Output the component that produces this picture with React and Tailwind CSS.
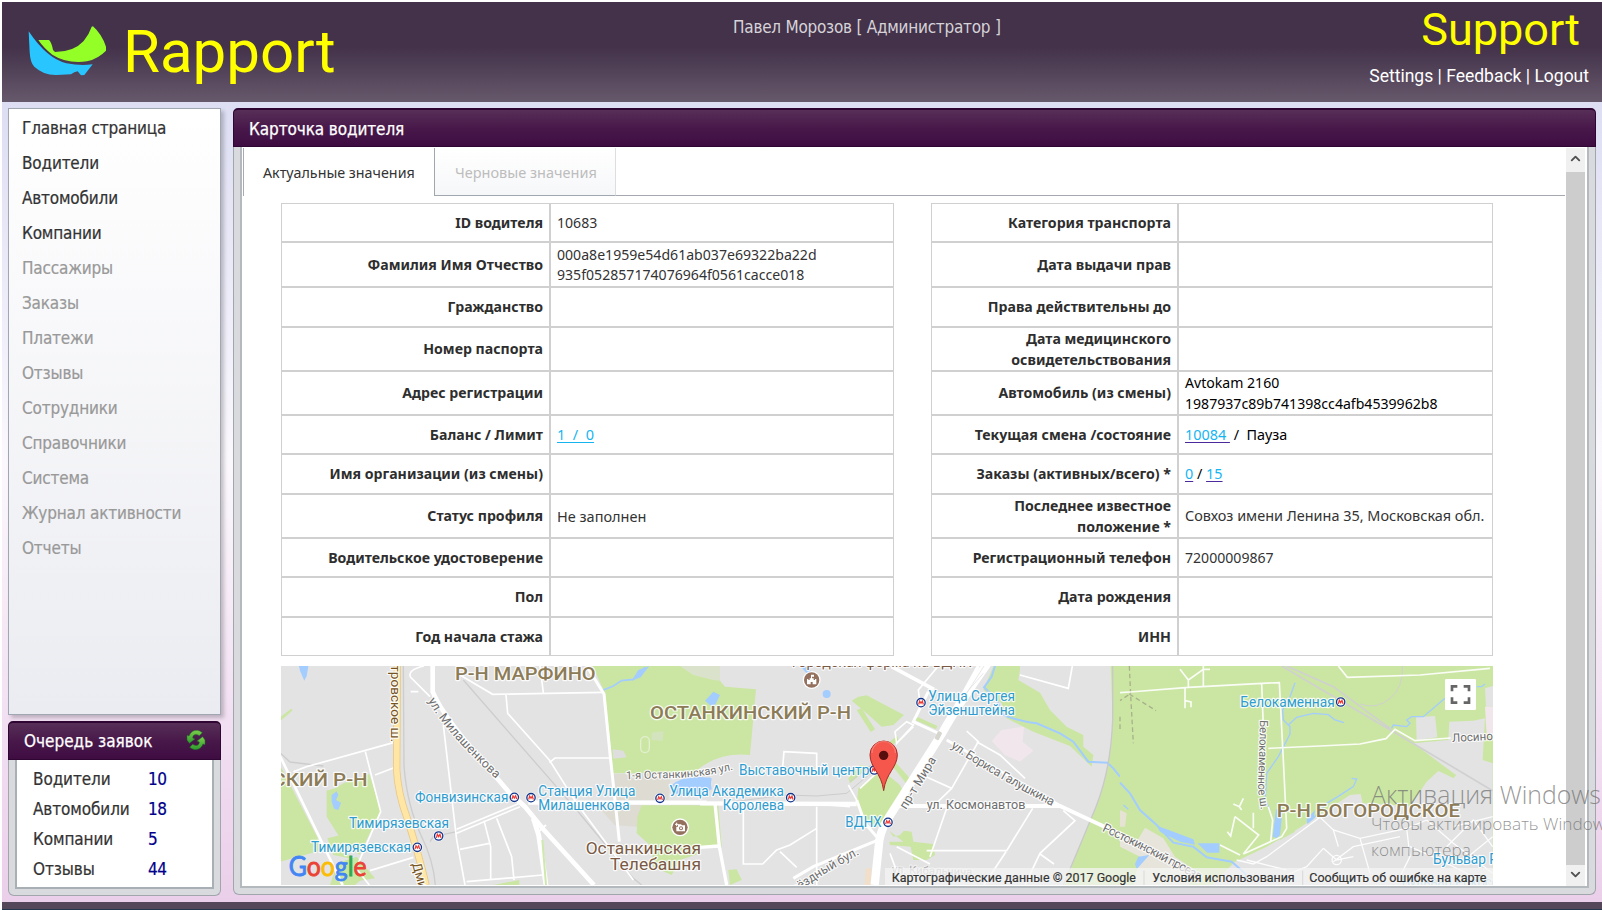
import React from "react";
import { ChevronUp, ChevronDown } from "lucide-react";

const menu = [
  "Главная страница", "Водители", "Автомобили", "Компании", "Пассажиры", "Заказы", "Платежи",
  "Отзывы", "Сотрудники", "Справочники", "Система", "Журнал активности", "Отчеты",
];

const queue = [["Водители", 10], ["Автомобили", 18], ["Компании", 5], ["Отзывы", 44]];

const rowHeights = [39, 45, 40, 44, 44, 39, 40, 44, 39, 40, 39];

function Link({ children }) {
  return <span className="text-[#17b4f2] underline decoration-[#4b2a9b] decoration-1 underline-offset-2">{children}</span>;
}

const leftRows = [
  ["ID водителя", "10683"],
  ["Фамилия Имя Отчество", <>000a8e1959e54d61ab037e69322ba22d<br />935f052857174076964f0561cacce018</>],
  ["Гражданство", ""],
  ["Номер паспорта", ""],
  ["Адрес регистрации", ""],
  ["Баланс / Лимит", <span className="whitespace-pre text-[14.5px] underline decoration-[#17b4f2] decoration-1 text-[#17b4f2] underline-offset-2">{"1  /  0"}</span>],
  ["Имя организации (из смены)", ""],
  ["Статус профиля", <span className="text-[14.5px]">Не заполнен</span>],
  ["Водительское удостоверение", ""],
  ["Пол", ""],
  ["Год начала стажа", ""],
];

const rightRows = [
  ["Категория транспорта", ""],
  ["Дата выдачи прав", ""],
  ["Права действительны до", ""],
  [<>Дата медицинского<br />освидетельствования</>, ""],
  ["Автомобиль (из смены)", <span className="text-black">Avtokam 2160<br />1987937c89b741398cc4afb4539962b8</span>],
  ["Текущая смена /состояние", <span className="whitespace-pre text-[14.4px] text-black"><Link>{"10084 "}</Link>{" /  Пауза"}</span>],
  ["Заказы (активных/всего) *", <span className="text-[14.4px] text-black"><Link>0</Link> / <Link>15</Link></span>],
  [<>Последнее известное<br />положение *</>, <span className="text-[14.45px]">Совхоз имени Ленина 35, Московская обл.</span>],
  ["Регистрационный телефон", "72000009867"],
  ["Дата рождения", ""],
  ["ИНН", ""],
];

function InfoTable({ rows, width, labelWidth }) {
  return (
    <table className="table-fixed border-separate border-spacing-0 text-[14.1px] leading-[20.5px] text-[#333]" style={{ width }}>
      <colgroup>
        <col style={{ width: labelWidth }} />
        <col />
      </colgroup>
      <tbody>
        {rows.map(([label, value], i) => (
          <tr key={i} style={{ height: rowHeights[i] }}>
            <th className="border border-[#d0d0d0] pt-px pr-[6px] pb-0 pl-0 text-right align-middle text-[14.15px] leading-[20.5px] font-bold text-[#2e2e2e] whitespace-nowrap">{label}</th>
            <td className="border border-[#d0d0d0] pt-px pr-0 pb-0 pl-[6px] align-middle whitespace-nowrap">{value}</td>
          </tr>
        ))}
      </tbody>
    </table>
  );
}

function Logo() {
  return (
    <svg viewBox="0 0 240 150" className="h-[50px] w-[80px]">
      <path d="M5 16 L8 78 Q10 112 22 122 Q50 148 88 147 L132 145 Q142 138 152 136 L162 148 L172 147 L197 115 Q160 120 118 112 Q60 98 5 16Z" fill="#29c5ff" />
      <path d="M34 42 L66 42 Q74 50 78 72 L84 78 Q140 78 170 45 Q186 26 194 2 L198 1 Q224 24 237 62 L237 74 Q214 98 180 106 Q120 114 76 86 Q50 66 34 42Z" fill="#94ff26" />
    </svg>
  );
}

function Refresh() {
  return (
    <svg viewBox="0 0 60 60" className="mb-[2px] h-[20px] w-[20px]">
      <defs>
        <linearGradient id="arrowGreen" x1="0" y1="0" x2="0" y2="1">
          <stop offset="0" stopColor="#7ccf4c" />
          <stop offset="1" stopColor="#2c9a2c" />
        </linearGradient>
      </defs>
      <path d="M3 16 L9 18 Q16 0 34 1 Q42 2 49 8 L40 17 Q30 11 24 15 Q20 18 20 24 L27 27 L10 40 L3 30Z" fill="url(#arrowGreen)" stroke="#226b2a" strokeWidth="1.5" />
      <path d="M57 44 L51 42 Q44 60 26 59 Q18 58 11 52 L20 43 Q30 49 36 45 Q40 42 40 36 L33 33 L50 20 L57 30Z" fill="url(#arrowGreen)" stroke="#226b2a" strokeWidth="1.5" />
    </svg>
  );
}

function Metro({ x, y }) {
  return (
    <g transform={`translate(${x} ${y})`}>
      <circle r="16.5" fill="#fff" opacity=".8" />
      <circle r="12.5" fill="#fff" stroke="#12368c" strokeWidth="4" />
      <path d="M-7 5.5 L-4 -5 L0 2 L4 -5 L7 5.5" fill="none" stroke="#ef3a34" strokeWidth="3.6" />
    </g>
  );
}

function Label({ x, y, w, size = 41.5, fill = "#2f9ccf", weight = 400, children }) {
  return (
    <text x={x} y={y} textLength={w} lengthAdjust="spacingAndGlyphs" fontSize={size} fill={fill} fontWeight={weight}
      stroke="#fff" strokeWidth="7" strokeOpacity=".85" strokeLinejoin="round" paintOrder="stroke">{children}</text>
  );
}

function PathLabel({ id, d, w, size = 37, fill = "#6e6e6e", opacity, children }) {
  return (
    <>
      <path id={id} d={d} fill="none" />
      <text fontSize={size} fill={fill} opacity={opacity} stroke="#fff" strokeWidth="7" strokeOpacity=".85" strokeLinejoin="round" paintOrder="stroke" textLength={w}>
        <textPath href={`#${id}`} textLength={w}>{children}</textPath>
      </text>
    </>
  );
}

const G = "#cbe6a3";
const W = "#a3ccff";
const DISTRICT = "#8c7b57";
const BROWN = "#7b5a45";

function CityMap() {
  return (
    <svg viewBox="3 18 3636 657" preserveAspectRatio="none" className="block h-[219px] w-[1212px] font-['Roboto',sans-serif]">
      <rect x="0" y="0" width="3640" height="700" fill="#e3e3e3" />

      {/* west */}
      <g>
        <path d="M57 18H85L80 48L73 62L60 32Z" fill={W} />
        <path d="M0 172L34 146L38 151L0 184Z" fill={G} />
        <path d="M0 315L112 532L120 572L0 605Z" fill={G} />
        <path d="M142 535L182 525L207 595L160 585Z" fill={G} />
        <path d="M140 392L165 385L190 370L268 342L302 452L238 585L190 550L140 470Z" fill={G} />
        <path d="M172 610L230 590L285 655L240 662L225 675H150Z" fill={G} />
        <path d="M155 405L170 394L175 405L168 420L183 428L175 450L162 446L155 425Z" fill={W} />
        <path d="M930 0H1320V62L1335 80L1428 88L1410 285Q1310 275 1240 340H1000L975 100Z" fill={G} />
        <path d="M1200 18L1240 45L1300 60L1320 62V18Z" fill="#dbe2cc" />
        <path d="M998 268L1030 272L1040 292L1000 296Z" fill="#dedede" />
        <path d="M1115 218L1150 213L1148 243L1115 240Z" fill="#d3e3be" />
        <rect x="1082" y="230" width="26" height="48" rx="13" fill="none" stroke="#e3efd0" strokeWidth="4" />
        <path d="M1000 342H1172L1165 420H1005Z" fill="#dddbd2" />
        <path d="M950 435H1085L1070 500L1005 496Z" fill="#dddbd2" />
        <path d="M1085 436H1315L1325 560L1290 570L1200 600L1175 645L1120 620L1115 560L1070 520L1072 470Z" fill={G} />
        <path d="M1168 380Q1210 340 1295 355L1290 390L1265 410L1180 400Z" fill={W} />
        <path d="M1055 62L1075 30L1108 18L1082 52Z" fill={W} />
        <path d="M970 90L1000 78L1025 62L1060 58L1095 22" fill="none" stroke={W} strokeWidth="5" />
        <path d="M640 675L718 660V675Z" fill={G} />
        <g fill="none" stroke="#cdcdcd" strokeWidth="4">
          <path d="M370 18L372 320Q382 440 425 530Q460 600 466 675M0 278L30 306L130 318M550 60L790 335L890 450L1060 655L1085 675M450 545L460 530L530 515" />
        </g>
        <g fill="none" stroke="#fff" strokeWidth="5">
          <path d="M40 335L80 320L340 248M256 275L302 455L228 625L268 675M285 345L350 320M270 632L400 592M392 95H415M432 18Q380 30 392 52L450 110M490 195L530 540L555 675M540 45L638 103L970 97M780 18L790 98M678 105L683 160L808 300L890 430L1060 660M808 308L825 294H990M530 508L718 430M530 520L720 440M612 482L632 560V660M650 475L695 590L702 660M540 568L628 550M560 665L788 645" />
        </g>
        <path d="M0 288L188 675" fill="none" stroke="#fff" strokeWidth="8" />
        <path d="M458 18V95Q480 150 560 248L690 400L735 440L790 508L942 675" fill="none" stroke="#fff" strokeWidth="14" />
        <path d="M920 18L972 102L992 300L1005 420L1018 545" fill="none" stroke="#fff" strokeWidth="9" />
        <path d="M745 428H1280" fill="none" stroke="#fff" strokeWidth="13" />
        <path d="M760 475L776 525L798 675" fill="none" stroke="#fff" strokeWidth="15" />
        <path d="M787 540L798 675" fill="none" stroke="#cfe8ad" strokeWidth="6" />
        <path d="M770 520L798 495" fill="none" stroke="#fff" strokeWidth="6" />
        <path d="M352 18L350 330Q354 400 380 470Q418 590 438 675" fill="none" stroke="#e9c987" strokeWidth="22" />
        <path d="M352 18L350 330Q354 400 380 470Q418 590 438 675" fill="none" stroke="#ffe6a4" strokeWidth="17" />
      </g>

      {/* centre */}
      <g transform="translate(1260 0)">
        <path d="M0 560L50 562L60 675H0Z" fill="#e3e3e3" />
        <path d="M85 630L110 628L125 660L90 675Z" fill={G} />
        <path d="M0 360L30 352L35 388L0 402Z" fill={W} />
        <path d="M15 122L40 95L60 105L48 130L38 142Z" fill={W} />
        <circle cx="380" cy="102" r="12" fill={W} />
        <path d="M300 18L325 45L335 35L318 18Z" fill={W} />
        <path d="M455 122L475 110L500 106L612 165L580 195L545 200L500 160Z" fill={G} />
        <path d="M470 150L485 145L525 208L512 216Z" fill={G} />
        <path d="M475 385L545 330L600 375L610 395L545 505L490 480L470 435Z" fill={G} />
        <path d="M640 178L655 172L712 198L708 208Z" fill={G} />
        <path d="M568 245L592 228L595 240L575 258Z" fill={G} />
        <path d="M445 355L480 315L510 320L450 370Z" fill={G} />
        <path d="M585 305L632 358L622 375L580 322Z" fill={G} />
        <path d="M568 512L580 530L600 525L612 512L635 515L640 545L700 552L705 585L680 600L640 600L632 560L570 555L568 545L610 545Z" fill={G} />
        <path d="M497 625H514L512 675H494Z" fill="#f1dfc9" />
        <path d="M875 243L905 210L972 200L968 245L1000 272L960 305L915 285Z" fill="#f1e6ec" />
        <path d="M888 0H960V30L955 60L1020 98L1050 150L1100 200L1150 225L1150 260L1180 285L1175 320L1110 258L1000 215L920 175L905 130L850 90Z" fill={G} />
        <path d="M1232 18L1238 180Q1232 330 1188 440L1130 580L1095 675H1270V18Z" fill={G} />
        <path d="M885 18L875 50L852 82L890 118L905 160Q930 178 1010 190L1080 220L1120 245L1165 305L1222 308L1240 325L1260 350" fill="none" stroke={W} strokeWidth="6" />
        <path d="M1238 0L1238 180Q1232 330 1188 440L1130 580L1090 675" fill="none" stroke="#c9c9c9" strokeWidth="4" />
        <path d="M100 425L260 405L350 408L440 400L530 325M450 365L520 310" fill="none" stroke="#cdcdcd" strokeWidth="3" />
        <g fill="none" stroke="#fff" strokeWidth="5">
          <path d="M130 440V612H188L230 570L270 555L350 505M350 440V675M248 320L252 275L350 280V335M240 575L290 622M715 18L655 90L660 130M450 440L380 435M445 375L470 420M480 385L545 325M585 215L620 185L640 195L590 250ZM600 240L640 200M655 340L755 385L835 245L800 213M755 385L688 450M740 445L690 590M680 572H920L998 445M975 675L1020 580L1125 482L1090 452M1020 582L1062 612M918 575L852 675M960 45L1105 85L1117 18M590 560L690 612M570 580L600 660M830 245L900 285L975 355" />
        </g>
        <path d="M0 430L470 432" fill="none" stroke="#fff" strokeWidth="13" />
        <path d="M575 20L702 88" fill="none" stroke="#fff" strokeWidth="11" />
        <path d="M685 95L640 185L720 222" fill="none" stroke="#fff" strokeWidth="9" />
        <path d="M740 240L1090 442" fill="none" stroke="#fff" strokeWidth="8" />
        <path d="M600 438L1080 438L1260 522" fill="none" stroke="#fff" strokeWidth="12" />
        <path d="M45 430L58 560L80 675M0 562L56 558" fill="none" stroke="#fff" strokeWidth="10" />
        <path d="M280 655L340 620L530 542M470 420L495 490L530 530" fill="none" stroke="#fff" strokeWidth="9" />
        <path d="M870 0Q770 140 725 222L560 482Q538 520 536 560L524 675" fill="none" stroke="#fff" strokeWidth="25" />
        <path d="M835 18L740 190" fill="none" stroke="#fff" strokeWidth="10" />
        <path d="M852 18L800 100M850 40L780 120" fill="none" stroke="#dcdcdc" strokeWidth="2" />
        <rect x="708" y="214" width="14" height="26" rx="4" transform="rotate(28 715 227)" fill="#d6d6cf" />
      </g>

      {/* east */}
      <g transform="translate(2520 0)">
        <rect x="0" y="0" width="1130" height="700" fill={G} />
        <path d="M0 450L20 460L15 500L0 500Z" fill="#e6e3d5" />
        <path d="M0 520L50 545L75 503L130 535L165 590L240 640L205 675L0 675Z" fill="#e6e4db" />
        <path d="M0 560L60 590L40 675H0Z" fill={G} />
        <path d="M275 675L345 605L440 560L520 515L560 490L690 405L722 402L728 430L870 438L920 365L955 333L1000 352L1008 345L880 250L985 240L988 185L1060 182L1095 175L1088 300L1118 310V675Z" fill="#e3e3e3" />
        <path d="M888 172L945 168L952 232L890 240Z" fill="#e3e3e3" />
        <path d="M1095 85L1130 75V140H1098Z" fill="#e3e3e3" />
        <path d="M1095 140H1130V235L1100 225Z" fill="#f1e6ec" />
        <path d="M958 333L1008 345L1000 355Z" fill={G} />
        <path d="M500 450L512 480L525 515L480 540L490 470Z" fill={G} />
        <g fill={W}>
          <path d="M468 448H488L480 525L470 535L458 530Z" />
          <path d="M560 478L585 450L580 478L562 492Z" />
          <path d="M112 498L140 508L220 538L225 554L180 545L120 515Z" />
          <path d="M232 550L298 550L298 578L262 578Z" />
          <path d="M55 590L88 585L50 628L45 612Z" />
        </g>
        <g fill="none" stroke={W} strokeWidth="6">
          <path d="M0 368L30 400L60 450L110 495L160 548L220 560L260 592L335 605L375 640L385 665" />
          <path d="M525 68L510 110L488 150L490 180L510 200V222L475 290L440 340L436 420L450 450" strokeWidth="4" />
          <path d="M505 195L530 172L580 160L625 164L645 180L672 188" strokeWidth="4" />
          <path d="M695 355L710 357L700 380L650 412L620 430L580 475M815 205L820 195L860 200L870 190L860 180L875 170L910 170L975 115M1070 80H1085L1095 72" strokeWidth="4" />
          <path d="M10 435L25 448" strokeWidth="4" />
        </g>
        <g fill="none" stroke="#d0d0d0" strokeWidth="5">
          <path d="M485 18L820 215L1118 392M500 18L640 80L810 205" />
          <path d="M720 132Q770 150 810 115Q850 85 847 18" strokeWidth="3" />
        </g>
        <g fill="none" stroke="#a9b18c" strokeWidth="4" strokeDasharray="14 9">
          <path d="M28 18L32 105L40 250M28 102L108 152M25 105L0 122M0 170V210" />
        </g>
        <g fill="none" stroke="#fff" strokeWidth="5" strokeOpacity=".9">
          <path d="M0 98L30 96L205 82L425 70L478 68L490 300L500 505L485 530L370 582M425 70L430 200M445 265L600 258L720 252L798 236L825 208L885 242L992 234M195 85V145M195 122L213 126V142M180 28L205 60V80M205 60L250 28H270M250 18V78M655 18L682 52L900 45L1110 25M445 440L458 480L452 545M345 470L416 525L370 582M345 470L332 528L322 515M340 432L358 440L370 415M358 440L365 450M400 458V505M300 555L360 585" />
          <path d="M350 600L400 612L440 590L600 472M600 472L640 510L720 535L860 505L920 480M640 510L655 560M720 535L750 640M610 565L560 620L500 645M610 565L650 600L700 590M860 505L870 590L840 650M870 560L960 600L1060 650M920 480L1000 550L1118 640M980 560L1060 480L1118 560M1000 500L1118 470M1020 610L1118 530M380 600L500 630M640 605L700 560L840 530" strokeWidth="4" />
          <circle cx="650" cy="600" r="14" strokeWidth="4" />
        </g>
      </g>

      {/* labels: west */}
      <Label x="525" y="60" w="422" size="55" weight="500" fill={DISTRICT}>Р-Н МАРФИНО</Label>
      <Label x="1110" y="176" w="603" size="55" weight="500" fill={DISTRICT}>ОСТАНКИНСКИЙ Р-Н</Label>
      <Label x="-23" y="378" w="286" size="55" weight="500" fill={DISTRICT}>СКИЙ Р-Н</Label>
      <PathLabel id="road-milash" d="M444 122Q500 225 680 385" w="312">ул. Милашенкова</PathLabel>
      <PathLabel id="road-ostank" d="M1038 358L1180 354Q1290 350 1370 325" w="324" size="33">1-я Останкинская ул.</PathLabel>
      <g transform="translate(333 16) rotate(90)"><Label x="0" y="0" w="230" size="39" fill="#76541f">тровское ш.</Label></g>
      <g transform="translate(396 612) rotate(74)"><Label x="0" y="0" w="98" size="39" fill="#76541f">Дмит</Label></g>
      <Label x="405" y="426" w="280">Фонвизинская</Label>
      <Label x="775" y="408" w="291">Станция Улица</Label>
      <Label x="775" y="449" w="274">Милашенкова</Label>
      <Label x="207" y="503" w="300">Тимирязевская</Label>
      <Label x="93" y="577" w="300">Тимирязевская</Label>
      <Label x="1168" y="408" w="344">Улица Академика</Label>
      <Label x="1328" y="449" w="184">Королева</Label>
      <Label x="917" y="582" w="346" size="47" fill={BROWN}>Останкинская</Label>
      <Label x="990" y="630" w="273" size="47" fill={BROWN}>Телебашня</Label>
      <Metro x="703" y="412" />
      <Metro x="753" y="413" />
      <Metro x="476" y="528" />
      <Metro x="412" y="562" />
      <Metro x="1140" y="415" />
      <Metro x="1532" y="413" />
      <g transform="translate(1200 502)">
        <circle r="27" fill="#fff" />
        <circle r="23" fill="#94705e" />
        <path d="M-6 -9H3L6 -6H15V12H-11V-2H-6Z" fill="#fff" />
        <path d="M-10 -14V-4M-15 -9H-5" stroke="#fff" strokeWidth="3" />
        <circle cx="3" cy="3" r="6" fill="#94705e" />
        <circle cx="3" cy="3" r="3" fill="#fff" />
      </g>

      {/* labels: centre */}
      <Label x="1535" y="20" w="540" size="44" fill={BROWN}>Городская ферма на ВДНХ</Label>
      <g transform="translate(1595 60)">
        <circle r="27" fill="#fff" />
        <circle r="23" fill="#94705e" />
        <path d="M-14 13V-3H-10V0H-6V-5H-2V-16H7V-10H1V-5H6V0H10V-3H14V13H3V6H-3V13Z" fill="#fff" />
      </g>
      <Label x="1377" y="345" w="391">Выставочный центр</Label>
      <Metro x="1783" y="330" />
      <Label x="1696" y="502" w="109">ВДНХ</Label>
      <Metro x="1824" y="487" />
      <Label x="1945" y="123" w="260">Улица Сергея</Label>
      <Label x="1945" y="164" w="260">Эйзенштейна</Label>
      <Metro x="1923" y="128" />
      <PathLabel id="road-mira" d="M1878 450L1975 290" w="176">пр-т Мира</PathLabel>
      <PathLabel id="road-galush" d="M2012 262Q2140 350 2340 450" w="352">ул. Бориса Галушкина</PathLabel>
      <Label x="1940" y="448" w="296" size="38" fill="#6e6e6e">ул. Космонавтов</Label>
      <PathLabel id="road-kib" d="M1835 640L2100 648" w="242" size="34" opacity=".5">ул. Кибальчича</PathLabel>
      <PathLabel id="road-star" d="M1525 712L1640 638L1760 570" w="250">Звёздный бул.</PathLabel>
      <PathLabel id="road-rost" d="M2465 512L2590 572L2770 668" w="330">Ростокинский проезд</PathLabel>

      {/* labels: east */}
      <Label x="2881" y="140" w="283">Белокаменная</Label>
      <Metro x="3182" y="126" />
      <PathLabel id="road-belo" d="M2940 180L2934 390L2950 500" w="270" size="34">Белокаменное ш.</PathLabel>
      <g transform="translate(3517 246) rotate(-3)"><Label x="0" y="0" w="196" size="35" fill="#6e6e6e">Лосиноостр</Label></g>
      <Label x="2990" y="471" w="550" size="55" weight="500" fill={DISTRICT}>Р-Н БОГОРОДСКОЕ</Label>
      <Label x="3459" y="611" w="240">Бульвар Рок</Label>
      <g opacity=".5"><Label x="3365" y="682" w="290">Бульвар Рокосс</Label></g>

      {/* pin */}
      <g transform="translate(1810 243)">
        <path d="M1 149C-6 95 -40 80 -40 41A41 41 0 1 1 42 41C42 80 8 95 1 149Z" fill="#f5574d" stroke="#a62b27" strokeWidth="3" />
        <path d="M-34 36A35 35 0 0 1 36 36" fill="none" stroke="#ff8a80" strokeWidth="4" opacity=".7" />
        <circle cx="1" cy="43" r="14" fill="#560f0c" />
      </g>

      {/* fullscreen button */}
      <rect x="3495" y="57" width="93" height="93" rx="4" fill="#fff" />
      <path d="M3516 94V79H3532M3551 79H3567V94M3567 112V128H3551M3532 128H3516V112" fill="none" stroke="#666" strokeWidth="8" />

      {/* provider mark and attribution */}
      <text x="26" y="647" fontSize="78" textLength="234" lengthAdjust="spacingAndGlyphs" strokeWidth="2.5" fontFamily="Lato, sans-serif">
        <tspan fill="#4285f4" stroke="#4285f4">G</tspan><tspan fill="#ea4335" stroke="#ea4335">o</tspan><tspan fill="#fbbc05" stroke="#fbbc05">o</tspan><tspan fill="#4285f4" stroke="#4285f4">g</tspan><tspan fill="#34a853" stroke="#34a853">l</tspan><tspan fill="#ea4335" stroke="#ea4335">e</tspan>
      </text>
      <rect x="1815" y="624" width="1824" height="51" fill="#f5f5f5" opacity=".72" />
      <g fill="#333" stroke="#333" strokeWidth=".5" fontSize="37">
        <text x="1835" y="667" textLength="733" lengthAdjust="spacingAndGlyphs">Картографические данные © 2017 Google</text>
        <text x="2617" y="667" textLength="427" lengthAdjust="spacingAndGlyphs">Условия использования</text>
        <text x="3088" y="667" textLength="531" lengthAdjust="spacingAndGlyphs">Сообщить об ошибке на карте</text>
      </g>
      <path d="M2592 632V675M3068 632V675" stroke="#cfcfcf" strokeWidth="2" />
    </svg>
  );
}

const panelHead = "shrink-0 rounded-t-[5px] border border-t-2 border-[#2f0533] bg-linear-to-b from-[#572f57] via-[#48184a] to-[#3f0c42] text-[17px] text-white [-webkit-text-stroke:0.25px]";
const panelBody = "rounded-b-[6px] border border-t-0 border-[#a0a6ab] bg-[#d8dade] px-[6px] pb-[6px]";

export default function App() {
  return (
    <div className="relative h-[910px] w-[1602px] overflow-hidden bg-white font-['DejaVu_Sans_Condensed','DejaVu_Sans',sans-serif]">
      <div className="ml-[2px] flex h-[910px] flex-col pt-[2px]">
        <header className="flex h-[100px] shrink-0 items-start bg-linear-to-b from-[#43324a] from-45% to-[#67596c] pr-[13px]">
          <div className="flex w-[731px] shrink-0 items-start pl-[25px]">
            <div className="pt-[24px]"><Logo /></div>
            <span className="pt-[14px] pl-[16px] font-['Roboto',sans-serif] text-[60px] leading-[72px] text-[#ff0]">Rapport</span>
          </div>
          <span className="pt-[12px] text-[17px] leading-[26px] tracking-[-0.25px] whitespace-nowrap text-[#d6d2d8]">Павел Морозов [ Администратор ]</span>
          <div className="ml-auto flex flex-col items-end font-['Roboto',sans-serif]">
            <span className="pt-px pr-[9px] text-[45px] leading-[54px] text-[#ff0]">Support</span>
            <span className="pt-[7px] text-[17.5px] leading-[24px] text-white">Settings | Feedback | Logout</span>
          </div>
        </header>

        <div className="flex min-h-0 flex-1 gap-[12px] bg-linear-to-b from-[#dddef3] via-[#fbf8fd] via-45% to-[#ebcfea] p-[6px]">
          <aside className="flex w-[213px] shrink-0 flex-col">
            <nav className="flex h-[607px] flex-col border border-[#a0a6b2] bg-linear-to-b from-white to-[#ebecf1] pt-[2px] pl-[13px] shadow-[3px_3px_4px_rgba(0,0,0,0.22)]">
              {menu.map((item, i) => (
                <span key={item} className={`h-[35px] text-[17px] leading-[35px] tracking-[-0.18px] whitespace-nowrap [-webkit-text-stroke:0.2px] ${i < 4 ? "text-[#333]" : "text-[#999]"}`}>{item}</span>
              ))}
            </nav>
            <section className="mt-[6px] flex flex-col">
              <div className={`${panelHead} flex h-[39px] items-center justify-between pr-[14px] pl-[15px]`}>
                <span className="pt-[2px]">Очередь заявок</span>
                <Refresh />
              </div>
              <div className={panelBody}>
                <div className="flex h-[129px] flex-col border-x-2 border-b-2 border-[#a9b0b5] bg-white pt-[4px] pl-[16px]">
                  {queue.map(([name, count]) => (
                    <div key={name} className="flex h-[30px] text-[17px] leading-[30px] [-webkit-text-stroke:0.2px]">
                      <span className="w-[115px] tracking-[-0.1px] text-[#333]">{name}</span>
                      <span className="tracking-[-0.5px] text-[#00008b]">{count}</span>
                    </div>
                  ))}
                </div>
              </div>
            </section>
          </aside>

          <main className="flex min-w-0 flex-1 flex-col">
            <div className={`${panelHead} flex h-[39px] items-center pl-[15px]`}>
              <span className="pt-[3px] tracking-[-0.1px]">Карточка водителя</span>
            </div>
            <div className={panelBody}>
              <div className="flex h-[741px] border-x-2 border-b-2 border-[#b3b9bd] bg-white font-['Noto_Sans','Open_Sans',sans-serif]">
                <div className="flex flex-1 flex-col">
                  <div className="flex h-[49px] shrink-0 pt-px pr-px pl-px text-[14.3px]">
                    <div className="flex w-[191px] items-center border-l border-[#a5abb1] pt-[2px] pl-[19px] text-[#333]">Актуальные значения</div>
                    <div className="flex w-[182px] items-center border-b border-l border-[#a0a7af] border-r border-r-[#dcdee0] bg-linear-to-b from-white to-[#f6f7f9] pt-[2px] pl-[20px] text-[14.5px] text-[#bdbdbd]">Черновые значения</div>
                    <div className="flex-1 border-b border-[#a5a9af]" />
                  </div>
                  <div className="flex gap-[37px] pt-[7px] pl-[39px]">
                    <InfoTable rows={leftRows} width={613} labelWidth={269} />
                    <InfoTable rows={rightRows} width={562} labelWidth={247} />
                  </div>
                  <div className="pt-[10px] pl-[39px]">
                    <CityMap />
                  </div>
                </div>
                <div className="mt-px mr-[2px] flex w-[19px] flex-col bg-[#cdcdcd]">
                  <div className="flex h-[24px] items-center justify-center bg-[#f0f0f0] pb-[3px] text-[#505050]"><ChevronUp size={15} strokeWidth={3} /></div>
                  <div className="flex-1" />
                  <div className="flex h-[21px] items-center justify-center bg-[#f0f0f0] pb-[2px] text-[#505050]"><ChevronDown size={15} strokeWidth={3} /></div>
                </div>
              </div>
            </div>
          </main>
        </div>
        <div className="h-[8px] shrink-0 border-b border-[#22364c] bg-[#54475a]" />
      </div>

      <div className="pointer-events-none absolute top-[777px] left-[1371px] w-[231px] overflow-hidden font-['Open_Sans','Noto_Sans',sans-serif] font-light whitespace-nowrap text-[#737373]/75">
        <div className="text-[24.8px] leading-[34px]">Активация Windows</div>
        <div className="text-[17.2px] leading-[26px]">Чтобы активировать Windows, перейдите в параметры</div>
        <div className="text-[17.2px] leading-[25px]">компьютера.</div>
      </div>
    </div>
  );
}
